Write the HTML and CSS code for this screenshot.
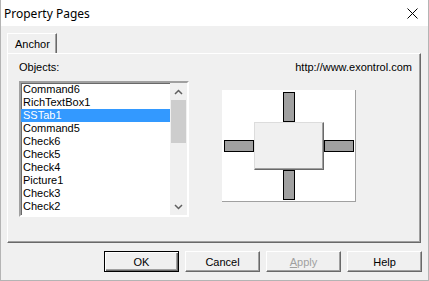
FILE: index.html
```html
<!DOCTYPE html>
<html lang="en">
<head>
  <meta charset="UTF-8" />
  <title>Property Pages</title>
  <link rel="stylesheet" href="styles.css">
</head>
<body>

  <div class="window">
    <div class="titlebar">
      <span class="title">Property Pages</span>
      <svg class="close" width="11" height="11" viewBox="0 0 11 11">
        <path d="M0.5 0.5 L10.5 10.5 M10.5 0.5 L0.5 10.5" stroke="#000" stroke-width="1" fill="none"/>
      </svg>
    </div>

    <div class="dialog">
      <div class="tabs">
        <div class="tab">Anchor</div>
      </div>

      <div class="panel">
        <div class="left">
          <div class="label">Objects:</div>
          <div class="listbox">
            <ul class="items">
              <li>Command6</li>
              <li>RichTextBox1</li>
              <li class="selected">SSTab1</li>
              <li>Command5</li>
              <li>Check6</li>
              <li>Check5</li>
              <li>Check4</li>
              <li>Picture1</li>
              <li>Check3</li>
              <li>Check2</li>
              <li>List2</li>
            </ul>
            <div class="scrollbar">
              <div class="arrow">
                <svg width="9" height="6" viewBox="0 0 9 6"><path d="M1 5 L4.5 1.5 L8 5" stroke="#606060" stroke-width="1.5" fill="none"/></svg>
              </div>
              <div class="thumb"></div>
              <div class="track"></div>
              <div class="arrow">
                <svg width="9" height="6" viewBox="0 0 9 6"><path d="M1 1 L4.5 4.5 L8 1" stroke="#606060" stroke-width="1.5" fill="none"/></svg>
              </div>
            </div>
          </div>
        </div>

        <div class="right">
          <div class="url">http://www.exontrol.com</div>
          <div class="anchor">
            <div class="bar vert top"></div>
            <div class="bar horiz left-bar"></div>
            <div class="control"></div>
            <div class="bar horiz right-bar"></div>
            <div class="bar vert bottom"></div>
          </div>
        </div>
      </div>

      <div class="buttons">
        <button class="btn default">OK</button>
        <button class="btn">Cancel</button>
        <button class="btn disabled"><u>A</u>pply</button>
        <button class="btn">Help</button>
      </div>
    </div>
  </div>

</body>
</html>
```

FILE: styles.css
```css
:root {
  --face: #f0f0f0;
  --shadow: #a0a0a0;
  --dark-shadow: #696969;
  --highlight: #3399ff;
}

body {
  margin: 0;
  font-family: 'Liberation Sans', Arial, sans-serif;
  font-size: 11px;
  color: #000;
}

.window {
  width: 429px;
  height: 281px;
  box-sizing: border-box;
  border: 1px solid #b4b4b4;
  border-top: none;
  background: var(--face);
  overflow: hidden;
}

.titlebar {
  height: 26px;
  background: white;
  display: flex;
  align-items: center;
  justify-content: space-between;
  padding: 0 10px 0 3px;
}

.title {
  font-family: 'Noto Sans', sans-serif;
  font-size: 12px;
}

.close {
  display: block;
  margin-top: 1px;
}

.dialog {
  padding-top: 7px;
}

.tabs {
  display: flex;
  padding-left: 6px;
}

.tab {
  width: 50px;
  height: 20px;
  box-sizing: border-box;
  border-top: 1px solid #fff;
  border-left: 1px solid #fff;
  border-right: 1px solid var(--dark-shadow);
  box-shadow: inset -1px 0 var(--shadow);
  line-height: 20px;
  padding-left: 7px;
}

.panel {
  margin-left: 6px;
  width: 414px;
  height: 190px;
  box-sizing: border-box;
  border: 1px solid;
  border-color: #fff var(--dark-shadow) var(--dark-shadow) #fff;
  box-shadow: inset -1px -1px var(--shadow);
  display: flex;
  padding: 7px 8px 0 11px;
}

.label {
  line-height: 13px;
  height: 13px;
  margin-bottom: 7px;
}

.listbox {
  width: 170px;
  height: 136px;
  box-sizing: border-box;
  border: 2px solid;
  border-color: var(--shadow) #fff #fff var(--shadow);
  box-shadow: inset 1px 1px var(--dark-shadow);
  background: white;
  display: flex;
}

.items {
  list-style: none;
  margin: 0;
  padding: 0;
  width: 149px;
  overflow: hidden;
}

.items li {
  height: 13px;
  line-height: 13px;
  padding-left: 2px;
  white-space: nowrap;
}

.items li.selected {
  background: var(--highlight);
  color: white;
}

.scrollbar {
  width: 17px;
  background: var(--face);
  display: flex;
  flex-direction: column;
}

.scrollbar .arrow {
  height: 17px;
  display: flex;
  align-items: center;
  justify-content: center;
}

.scrollbar .thumb {
  height: 43px;
  margin: 0 1px;
  background: #cdcdcd;
}

.scrollbar .track {
  flex: 1;
}

.right {
  flex: 1;
  margin-left: 33px;
}

.url {
  text-align: right;
  line-height: 13px;
  height: 13px;
}

.anchor {
  margin-top: 16px;
  width: 134px;
  height: 112px;
  box-sizing: border-box;
  background: white;
  border-right: 1px solid var(--shadow);
  border-bottom: 1px solid var(--shadow);
  padding: 2px;
  display: grid;
  grid-template-columns: 30px 70px 30px;
  grid-template-rows: 30px 48px 30px;
}

.bar {
  background: var(--shadow);
  border: 1px solid #000;
  box-sizing: border-box;
}

.bar.vert {
  width: 12px;
  height: 30px;
  justify-self: center;
}

.bar.horiz {
  width: 30px;
  height: 12px;
  align-self: center;
}

.bar.top { grid-column: 2; grid-row: 1; }
.bar.left-bar { grid-column: 1; grid-row: 2; }
.bar.right-bar { grid-column: 3; grid-row: 2; }
.bar.bottom { grid-column: 2; grid-row: 3; }

.control {
  grid-column: 2;
  grid-row: 2;
  background: var(--face);
  border: 1px solid;
  border-color: #dcdcdc var(--dark-shadow) var(--dark-shadow) #dcdcdc;
  box-shadow: inset -1px -1px var(--shadow);
}

.buttons {
  display: flex;
  justify-content: flex-end;
  gap: 6px;
  margin-top: 8px;
  padding-right: 6px;
}

.btn {
  width: 75px;
  height: 21px;
  box-sizing: border-box;
  font-family: 'Liberation Sans', Arial, sans-serif;
  font-size: 11px;
  color: #000;
  background: var(--face);
  border: 1px solid;
  border-color: #fff var(--dark-shadow) var(--dark-shadow) #fff;
  box-shadow: inset -1px -1px var(--shadow);
  padding: 0;
}

.btn.default {
  border-color: #000;
  box-shadow: inset 1px 1px #fff, inset -1px -1px var(--dark-shadow), inset -2px -2px var(--shadow);
}

.btn.disabled {
  color: var(--shadow);
}
```
